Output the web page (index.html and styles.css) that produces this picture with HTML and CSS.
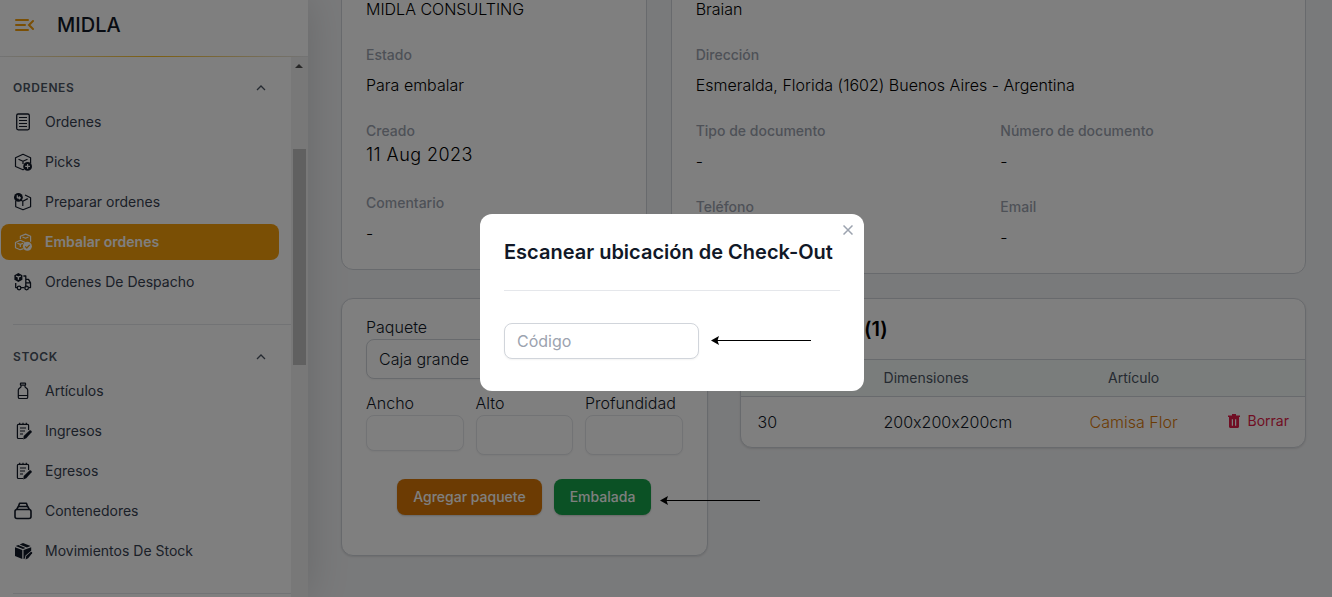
FILE: index.html
```
<!DOCTYPE html>
<html lang="es">
<head>
    <meta charset="UTF-8">
    <meta name="viewport" content="width=device-width, initial-scale=1.0">
    <title>MIDLA - Embalar ordenes</title>
    <link rel="stylesheet" href="styles.css">
</head>
<body>
    <div class="layout">
        <aside class="sidebar">
            <header class="sidebar-header">
                <button class="menu-btn" type="button" aria-label="Menu">
                    <svg width="20" height="14" viewBox="0 0 20 14" fill="none" stroke="currentColor" stroke-width="2" stroke-linecap="round">
                        <path d="M2 2h12M2 7h9M2 12h12M19 3l-4 4 4 4"/>
                    </svg>
                </button>
                <span class="brand">MIDLA</span>
            </header>

            <div class="sidebar-body">
                <nav class="nav">
                    <section class="nav-section">
                        <h2 class="nav-title">Ordenes
                            <svg width="10" height="6" viewBox="0 0 10 6" fill="none" stroke="currentColor" stroke-width="1.3"><path d="M1 5l4-4 4 4"/></svg>
                        </h2>
                        <a class="nav-item" href="#">
                            <svg class="nav-icon" viewBox="0 0 20 20" fill="none" stroke="currentColor" stroke-width="1.3">
                                <rect x="3.7" y="2" width="12.6" height="15.8" rx="1.5"/>
                                <path d="M6 5.500h8M6 8.500h8M6 11.500h8M6 14.500h8" stroke-width="1.1"/>
                            </svg>
                            Ordenes
                        </a>
                        <a class="nav-item" href="#">
                            <svg class="nav-icon" viewBox="0 0 20 20" fill="none" stroke="currentColor" stroke-width="1.2" stroke-linejoin="round">
                                <path d="M11 17.3l-1 .5-7.5-3.3V5.8L10 2.3l7.6 3.5V11M5.5 7.2L10 9.3l4.5-2.1M10 9.3V12"/>
                                <circle cx="14.6" cy="14.4" r="4.4" fill="currentColor" stroke="none"/>
                                <path class="cutout" d="M14.6 12v4.8M12.2 14.4H17"/>
                            </svg>
                            Picks
                        </a>
                        <a class="nav-item" href="#">
                            <svg class="nav-icon" viewBox="0 0 20 20" fill="none" stroke="currentColor" stroke-width="1.2" stroke-linejoin="round">
                                <path d="M2.7 9v5.7L10 17.8l7.6-3.1V5.8L12 3M10 17.8M9.8 14V9.2l5-2.6M9.8 9.2L7.5 8"/>
                                <circle cx="5.4" cy="5.3" r="4.4" fill="currentColor" stroke="none"/>
                                <path class="cutout" d="M4.3 3.2v2.6h2.9M5.8 4.5l1.6 1.4L5.8 7.3"/>
                            </svg>
                            Preparar ordenes
                        </a>
                        <a class="nav-item nav-item-active" href="#" aria-current="page">
                            <svg class="nav-icon" viewBox="0 0 20 20" fill="none" stroke="currentColor" stroke-width="1.2" stroke-linejoin="round">
                                <path d="M7.4 7V4.2l5.2-2.1 5 2.1v5.6M9.5 5l3 1.2 3-1.2"/>
                                <path d="M10.5 16.6l-3.4 1.1-4.6-1.9v-5.3l4.8-2.2 5 2.2M4.4 11.2l2.9 1.2 2.9-1.2M7.3 12.4v2.6"/>
                                <circle cx="14.4" cy="14.3" r="4.5" fill="currentColor" stroke="none"/>
                                <path class="cutout" d="M12.2 14.4l1.6 1.6 2.9-3.2"/>
                            </svg>
                            Embalar ordenes
                        </a>
                        <a class="nav-item" href="#">
                            <svg class="nav-icon" viewBox="0 0 20 20" fill="none" stroke="currentColor" stroke-width="1.3" stroke-linejoin="round">
                                <path d="M1.4 3.2L5.4 1l4 2.2v4.6L5.4 10l-4-2.2z" fill="currentColor" stroke="none"/>
                                <path class="cutout" d="M3 4l2.4 1.2L7.8 4M5.4 5.2v2.6"/>
                                <path d="M10.4 4h2.4v11.6M2.7 11v4.6h1.6M8 15.6h3.4M12.8 7.4h2.7l2 3.4v4.8h-1.7M12.8 10.8h4.7"/>
                                <circle cx="6.1" cy="16" r="1.8"/>
                                <circle cx="13.6" cy="16" r="1.8"/>
                            </svg>
                            Ordenes De Despacho
                        </a>
                    </section>

                    <section class="nav-section">
                        <h2 class="nav-title">Stock
                            <svg width="10" height="6" viewBox="0 0 10 6" fill="none" stroke="currentColor" stroke-width="1.3"><path d="M1 5l4-4 4 4"/></svg>
                        </h2>
                        <a class="nav-item" href="#">
                            <svg class="nav-icon" viewBox="0 0 20 20" fill="none" stroke="currentColor" stroke-width="1.2" stroke-linejoin="round">
                                <rect x="7.4" y="2.2" width="5.2" height="2" rx=".6"/>
                                <path d="M8 4.200v1.600c0 .7-2.700 1.400-2.700 3.100v7.300c0 .8.5 1.300 1.300 1.300h6.800c.8 0 1.300-.5 1.300-1.300V8.900c0-1.700-2.700-2.400-2.700-3.100V4.200M5.300 14.500h9.400"/>
                            </svg>
                            Artículos
                        </a>
                        <a class="nav-item" href="#">
                            <svg class="nav-icon" viewBox="0 0 20 20" fill="none" stroke="currentColor" stroke-width="1.2">
                                <path d="M10 17.500H5.400a1 1 0 0 1-1-1V4.400a1 1 0 0 1 1-1h9.200a1 1 0 0 1 1 1V9M6.700 1.800v1.600M10 1.800v1.600M13.300 1.800v1.600M7 7h6M7 10h5M7 13h3"/>
                                <path d="M10.200 18.500l.5-3.600 6-5.600c.9-.7 2.700.9 1.900 1.900l-5.300 6.100z" fill="currentColor" stroke="none"/>
                            </svg>
                            Ingresos
                        </a>
                        <a class="nav-item" href="#">
                            <svg class="nav-icon" viewBox="0 0 20 20" fill="none" stroke="currentColor" stroke-width="1.2">
                                <path d="M10 17.500H5.400a1 1 0 0 1-1-1V4.400a1 1 0 0 1 1-1h9.200a1 1 0 0 1 1 1V9M6.700 1.800v1.600M10 1.800v1.600M13.300 1.800v1.600M7 7h6M7 10h5M7 13h3"/>
                                <path d="M10.200 18.500l.5-3.600 6-5.600c.9-.7 2.700.9 1.900 1.900l-5.300 6.100z" fill="currentColor" stroke="none"/>
                            </svg>
                            Egresos
                        </a>
                        <a class="nav-item" href="#">
                            <svg class="nav-icon" viewBox="0 0 20 20" fill="none" stroke="currentColor" stroke-width="1.6" stroke-linejoin="round">
                                <rect x="2" y="8.500" width="16" height="9" rx="2"/>
                                <path d="M3.600 8.700l1.700-3.200h9.400l1.700 3.200M5.400 5.500l1.200-3.300h6.800l1.200 3.300"/>
                            </svg>
                            Contenedores
                        </a>
                        <a class="nav-item" href="#">
                            <svg class="nav-icon" viewBox="0 0 20 20" fill="currentColor">
                                <path d="M2 6.200l7.300 2.900v9L2 15.100zM2.700 5.100l2.600-1.100 7.200 3-2.500 1.100zM6.600 3.400L10 1.900l7.600 3.200-3.700 1.500zM10.500 9.100l7.700-2.900v3.600l-5.700 4.600-.6 3-1.400.7z"/>
                                <path d="M12.600 18.600l.6-3.500 4.500-4.200c.8-.5 1.900.6 1.400 1.400l-3.900 4.900z"/>
                            </svg>
                            Movimientos De Stock
                        </a>
                    </section>
                </nav>

                <div class="scrollbar">
                    <div class="scrollbar-arrow"></div>
                    <div class="scrollbar-thumb"></div>
                </div>
            </div>
        </aside>

        <main class="main">
            <div class="content">
                <div class="info-grid">
                    <section class="card details">
                        <div class="value">MIDLA CONSULTING</div>
                        <div class="field">
                            <div class="label">Estado</div>
                            <div class="value">Para embalar</div>
                        </div>
                        <div class="field">
                            <div class="label">Creado</div>
                            <time class="date" datetime="2023-08-11">11 Aug 2023</time>
                        </div>
                        <div class="field">
                            <div class="label">Comentario</div>
                            <div class="value">-</div>
                        </div>
                    </section>

                    <section class="card details details-wide">
                        <div class="value full">Braian</div>
                        <div class="field full">
                            <div class="label">Dirección</div>
                            <div class="value">Esmeralda, Florida (1602) Buenos Aires - Argentina</div>
                        </div>
                        <div class="field">
                            <div class="label">Tipo de documento</div>
                            <div class="value">-</div>
                        </div>
                        <div class="field">
                            <div class="label">Número de documento</div>
                            <div class="value">-</div>
                        </div>
                        <div class="field">
                            <div class="label">Teléfono</div>
                        </div>
                        <div class="field">
                            <div class="label">Email</div>
                            <div class="value">-</div>
                        </div>
                    </section>
                </div>

                <div class="pack-grid">
                    <form class="card pack-form">
                        <div class="form-row">
                            <label for="paquete">Paquete</label>
                            <select class="input input-lg select" id="paquete">
                                <option>Caja grande</option>
                            </select>
                        </div>
                        <div class="sizes">
                            <div class="form-row">
                                <label for="ancho">Ancho</label>
                                <input class="input size" id="ancho" type="text">
                            </div>
                            <div class="form-row">
                                <label for="alto">Alto</label>
                                <input class="input input-lg size" id="alto" type="text">
                            </div>
                            <div class="form-row">
                                <label for="profundidad">Profundidad</label>
                                <input class="input input-lg size" id="profundidad" type="text">
                            </div>
                        </div>
                        <div class="actions">
                            <button class="btn btn-amber" type="button">Agregar paquete</button>
                            <div class="pointed">
                                <button class="btn btn-green" type="button">Embalada</button>
                                <svg class="arrow arrow-side" width="100" height="10" viewBox="0 0 100 10">
                                    <path d="M6 4.500h94" stroke="#000"/>
                                    <path d="M0 4.500L8 0 6.500 4.500 8 9z"/>
                                </svg>
                            </div>
                        </div>
                    </form>

                    <section class="card packages">
                        <h2 class="packages-title">Paquetes (1)</h2>
                        <table class="table">
                            <thead>
                                <tr>
                                    <th class="col-weight"></th>
                                    <th class="col-size">Dimensiones</th>
                                    <th class="col-item">Artículo</th>
                                    <th class="col-action"></th>
                                </tr>
                            </thead>
                            <tbody>
                                <tr>
                                    <td>30</td>
                                    <td>200x200x200cm</td>
                                    <td class="col-item"><a class="item-link" href="#">Camisa Flor</a></td>
                                    <td class="col-action">
                                        <button class="delete-btn" type="button">
                                            <svg width="12" height="14" viewBox="0 0 12 14" fill="currentColor">
                                                <path fill-rule="evenodd" d="M4 0h4v1.500h4V3H0V1.500h4zM1 3h10v9.500c0 .9-.6 1.500-1.500 1.500h-7C1.600 14 1 13.400 1 12.500zM3.800 5.200v6.500h1.200V5.200zM7 5.200v6.500h1.200V5.200z"/>
                                            </svg>
                                            Borrar
                                        </button>
                                    </td>
                                </tr>
                            </tbody>
                        </table>
                    </section>
                </div>
            </div>
        </main>
    </div>

    <div class="overlay">
        <div class="modal" role="dialog" aria-modal="true" aria-labelledby="modal-title">
            <button class="close-btn" type="button" aria-label="Cerrar">
                <svg width="10" height="10" viewBox="0 0 10 10" fill="none" stroke="currentColor" stroke-width="1.500"><path d="M.5.5l9 9M9.500.5l-9 9"/></svg>
            </button>
            <h1 class="modal-title" id="modal-title">Escanear ubicación de Check-Out</h1>
            <div class="scan">
                <input class="input scan-input" type="text" placeholder="Código" aria-label="Código">
                <svg class="arrow" width="100" height="10" viewBox="0 0 100 10">
                    <path d="M6 4.500h94" stroke="#000"/>
                    <path d="M0 4.500L8 0 6.500 4.500 8 9z"/>
                </svg>
            </div>
        </div>
    </div>
</body>
</html>
```

FILE: styles.css
```
* {
    margin: 0;
    padding: 0;
    box-sizing: border-box;
}

body {
    font-family: Inter, "Liberation Sans", sans-serif;
    font-size: 16px;
    line-height: 24px;
    font-feature-settings: "calt" 0;
    color: #111827;
    background: #f3f4f6;
    overflow: hidden;
}

button,
input,
select {
    font: inherit;
    color: inherit;
}

button {
    border: none;
    background: none;
    cursor: pointer;
}

a {
    color: inherit;
    text-decoration: none;
}

.layout {
    display: flex;
    height: 100vh;
}

/* Sidebar */
.sidebar {
    display: flex;
    flex-direction: column;
    flex: none;
    width: 308px;
    background: white;
    box-shadow: 0 0 40px rgba(0, 0, 0, 0.15);
    z-index: 1;
}

.sidebar-header {
    display: flex;
    align-items: center;
    gap: 23px;
    height: 57px;
    padding: 0 14px 6px;
    border-bottom: 1px solid;
    border-image: linear-gradient(90deg, #e5e7eb, #fbbf24 50%, #e5e7eb) 1;
}

.menu-btn {
    display: flex;
    color: #f59e0b;
}

.brand {
    font-size: 20px;
    font-weight: 500;
}

.sidebar-body {
    display: flex;
    flex: 1;
    min-height: 0;
}

.nav {
    flex: 1;
    padding-top: 23px;
    overflow: hidden;
}

.nav-section {
    display: flex;
    flex-direction: column;
    gap: 4px;
    padding-bottom: 24px;
    margin-bottom: 25px;
    position: relative;
}

.nav-section::after {
    content: "";
    position: absolute;
    left: 13px;
    right: 0;
    bottom: -1px;
    border-bottom: 1px solid #e5e7eb;
}

.nav-title {
    display: flex;
    align-items: center;
    justify-content: space-between;
    margin-bottom: 4px;
    padding: 0 25px 0 13px;
    font-size: 12px;
    line-height: 16px;
    font-weight: 600;
    letter-spacing: 0.05em;
    text-transform: uppercase;
    color: #4b5563;
}

.nav-item {
    display: flex;
    align-items: center;
    gap: 12px;
    height: 36px;
    margin: 0 12px 0 1px;
    padding-left: 12px;
    border-radius: 8px;
    font-size: 14px;
    color: #374151;
}

.nav-item-active {
    background: #f59e0b;
    color: white;
    font-weight: 600;
}

.nav-icon {
    width: 20px;
    height: 20px;
    color: #111827;
}

.nav-item-active .nav-icon {
    color: white;
}

.cutout {
    stroke: white;
}

.nav-item-active .cutout {
    stroke: #f59e0b;
}

.scrollbar {
    width: 17px;
    padding: 7px 2px;
    background: #f1f1f1;
}

.scrollbar-arrow {
    width: 8px;
    margin: 0 0 81px 2px;
    border: 4px solid transparent;
    border-top-width: 0;
    border-bottom-color: #505050;
}

.scrollbar-thumb {
    height: 216px;
    background: #c1c1c1;
}

/* Content, scrolled down a little inside the main pane */
.main {
    flex: 1;
    min-width: 0;
    overflow: hidden;
}

.content {
    display: flex;
    flex-direction: column;
    gap: 24px;
    margin-top: -28px;
    padding: 0 26px 24px 33px;
}

.card {
    background: white;
    border: 1px solid #d1d5db;
    border-radius: 12px;
}

.info-grid {
    display: grid;
    grid-template-columns: repeat(3, minmax(0, 1fr));
    gap: 24px;
    align-items: start;
}

.details {
    display: grid;
    gap: 24px;
    padding: 24px;
}

.details-wide {
    grid-column: span 2;
    grid-template-columns: 1fr 1fr;
}

.full {
    grid-column: 1 / -1;
}

.label {
    font-size: 14px;
    line-height: 20px;
    font-weight: 500;
    color: #9ca3af;
}

.value {
    font-weight: 300;
    color: black;
}

.label + .value {
    margin-top: 8px;
}

.date {
    display: block;
    font-size: 18px;
    line-height: 28px;
    font-weight: 300;
    letter-spacing: 0.025em;
    color: black;
}

.pack-grid {
    display: grid;
    grid-template-columns: 11fr 17fr;
    gap: 32px;
    align-items: start;
}

.pack-form {
    display: flex;
    flex-direction: column;
    gap: 12px;
    padding: 16px 24px 40px;
    font-weight: 300;
    box-shadow: 0 1px 2px rgba(0, 0, 0, 0.1);
}

.form-row {
    display: flex;
    flex-direction: column;
}

.sizes {
    display: grid;
    grid-template-columns: repeat(3, minmax(0, 1fr));
    gap: 12px;
    align-items: start;
}

.input {
    width: 100%;
    height: 36px;
    padding: 0 12px;
    background: white;
    border: 1px solid #d1d5db;
    border-radius: 8px;
    box-shadow: 0 1px 2px rgba(0, 0, 0, 0.05);
}

.input::placeholder {
    color: #9ca3af;
}

.input-lg {
    height: 40px;
}

.size {
    border-color: #e5e7eb;
}

.select {
    appearance: none;
}

.actions {
    display: flex;
    justify-content: center;
    gap: 12px;
    margin-top: 12px;
}

.btn {
    height: 36px;
    padding: 0 16px;
    border-radius: 8px;
    font-size: 14px;
    font-weight: 500;
    color: white;
    box-shadow: 0 1px 2px rgba(0, 0, 0, 0.2);
}

.btn-amber {
    background: #d97706;
}

.btn-green {
    background: #16a34a;
}

.pointed {
    position: relative;
}

.arrow {
    flex: none;
}

.arrow-side {
    position: absolute;
    left: 100%;
    top: 17px;
    margin-left: 9px;
}

.packages {
    overflow: hidden;
    box-shadow: 0 1px 2px rgba(0, 0, 0, 0.1);
}

.packages-title {
    padding: 16px 16px 16px 28px;
    font-size: 20px;
    line-height: 28px;
    font-weight: 600;
    color: black;
}

.table {
    width: 100%;
    border-collapse: collapse;
    table-layout: fixed;
    text-align: left;
}

.table th {
    height: 37px;
    font-size: 14px;
    font-weight: 400;
    color: #4b5563;
    background: #f5faf8;
    border-top: 1px solid #d1d5db;
    border-bottom: 1px solid #d1d5db;
}

.table td {
    height: 50px;
    font-weight: 300;
}

.table th:first-child,
.table td:first-child {
    padding-left: 17px;
}

.table .col-item {
    text-align: center;
}

.table .col-action {
    padding-right: 16px;
    text-align: right;
}

.col-weight {
    width: 143px;
}

.col-action {
    width: 88px;
}

.item-link {
    color: #d97706;
}

.delete-btn {
    display: inline-flex;
    align-items: center;
    gap: 8px;
    font-size: 14px;
    font-weight: 400;
    color: #e11d48;
}

/* Modal */
.overlay {
    position: fixed;
    inset: 0;
    z-index: 10;
    display: flex;
    align-items: center;
    justify-content: center;
    padding: 8px 0 0 12px;
    background: rgba(0, 0, 0, 0.5);
}

.modal {
    position: relative;
    width: 384px;
    padding: 24px 24px 32px;
    background: white;
    border-radius: 12px;
}

.close-btn {
    position: absolute;
    top: 11px;
    right: 11px;
    display: flex;
    color: #9ca3af;
}

.modal-title {
    padding-bottom: 24px;
    border-bottom: 1px solid #e5e7eb;
    font-size: 20px;
    line-height: 28px;
    font-weight: 600;
    white-space: nowrap;
}

.scan {
    display: flex;
    align-items: center;
    gap: 12px;
    padding-top: 32px;
}

.scan-input {
    width: 195px;
}
```
